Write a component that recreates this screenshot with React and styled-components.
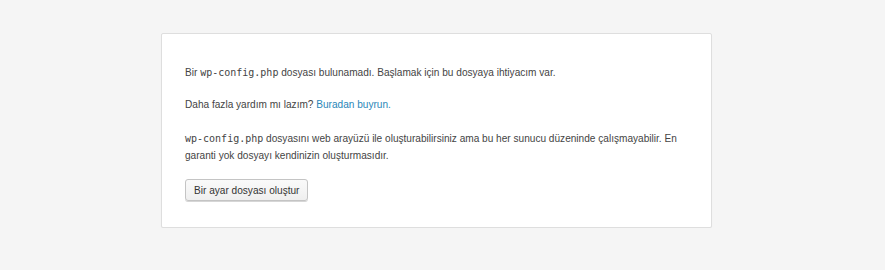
import React from "react";
import styled, { createGlobalStyle } from "styled-components";

const Global = createGlobalStyle`
  html, body { margin: 0; padding: 0; }
  body {
    background: #f5f5f5;
    font-family: "Liberation Sans", Arial, sans-serif;
    color: #444;
  }
`;

const Page = styled.div`
  display: flex;
  justify-content: center;
  padding: 33px 12px 0 0;
`;

const Card = styled.main`
  box-sizing: border-box;
  width: 551px;
  background: #fff;
  border: 1px solid #dedede;
  border-radius: 2px;
  box-shadow: 0 1px 1px rgba(0, 0, 0, 0.04);
  padding: 15px 23px 26px;
  font-size: 10.1px;
  line-height: 17px;
`;

const Para = styled.p`
  margin: ${(p) => (p.$extra ? "17px" : "15px")} 0 15px;
`;

const Code = styled.code`
  font-family: "DejaVu Sans Mono", "Liberation Mono", monospace;
  font-size: 10px;
  color: #444;
`;

const Link = styled.a`
  color: #2a86b8;
  text-decoration: none;
`;

const Actions = styled.div`
  margin: 13px 0 0;
  display: flex;
`;

const Button = styled.button`
  font-family: "Liberation Sans", Arial, sans-serif;
  font-size: 10.1px;
  color: #333;
  height: 22px;
  padding: 0 8px;
  background: linear-gradient(#fafafa, #efefef);
  border: 1px solid #c4c4c4;
  border-radius: 3px;
  box-shadow: 0 1px 0 #d6d6d6;
  cursor: pointer;
`;

export default function App() {
  return (
    <>
      <Global />
      <Page>
        <Card>
          <Para>
            Bir <Code>wp-config.php</Code> dosyası bulunamadı. Başlamak için bu dosyaya ihtiyacım var.
          </Para>
          <Para>
            Daha fazla yardım mı lazım? <Link href="#">Buradan buyrun.</Link>
          </Para>
          <Para $extra>
            <Code>wp-config.php</Code> dosyasını web arayüzü ile oluşturabilirsiniz ama bu her sunucu düzeninde çalışmayabilir. En garanti yok dosyayı kendinizin oluşturmasıdır.
          </Para>
          <Actions>
            <Button>Bir ayar dosyası oluştur</Button>
          </Actions>
        </Card>
      </Page>
    </>
  );
}
